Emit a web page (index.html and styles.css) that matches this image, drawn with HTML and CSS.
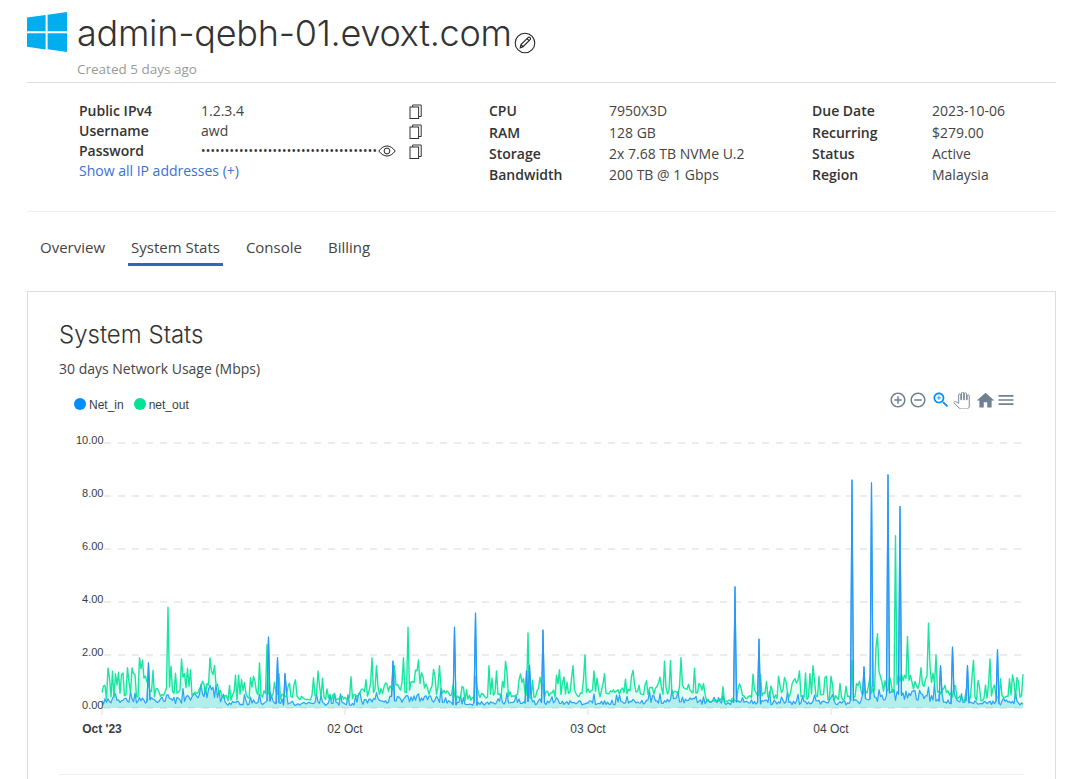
FILE: index.html
```html
<!DOCTYPE html>
<html lang="en">
<head>
<meta charset="utf-8">
<title>admin-qebh-01.evoxt.com</title>
<link rel="stylesheet" href="styles.css">
</head>
<body>
<div class="page">
  <header class="head">
    <svg class="oslogo" viewBox="0 0 40 40"><path d="M0 5.600 18.600 3v16.200H0zM20.600 2.700 40 0v19.200H20.600zM0 21.200h18.600v16.200L0 34.800zM20.600 21.200H40V40l-19.400-2.700z"/></svg>
    <div class="head-text">
      <div class="title-row">
        <h1 class="title">admin-qebh-01.evoxt.com</h1>
        <svg class="edit" viewBox="0 0 22 22"><circle cx="11" cy="11" r="9.800"/><path d="M6.200 15.800 7 12.600 14 5.600c.6-.6 1.500-.6 2.100 0s.6 1.500 0 2.100l-7 7zM13 6.600l2.400 2.400M7 12.600l2.100 2.100"/></svg>
      </div>
      <div class="created">Created 5 days ago</div>
    </div>
  </header>

  <section class="info">
    <div class="ip-grid">
      <span class="label">Public IPv4</span><span class="value">1.2.3.4</span>
      <svg class="copy" viewBox="0 0 14 15"><rect x="1" y="3" width="8.600" height="11.500"/><path d="M3.600 3V1h8.600v11.500h-2.600"/></svg>
      <span class="label">Username</span><span class="value">awd</span>
      <svg class="copy" viewBox="0 0 14 15"><rect x="1" y="3" width="8.600" height="11.500"/><path d="M3.600 3V1h8.600v11.500h-2.600"/></svg>
      <span class="label">Password</span>
      <span class="value pass"><span class="dots">•••••••••••••••••••••••••••••••••••••</span><svg class="eye" viewBox="0 0 18 12"><path d="M.8 6C3.400 2.600 6 1 9 1s5.600 1.600 8.200 5c-2.600 3.400-5.200 5-8.200 5S3.400 9.400.8 6z"/><circle cx="9" cy="6" r="2.900"/></svg></span>
      <svg class="copy" viewBox="0 0 14 15"><rect x="1" y="3" width="8.600" height="11.500"/><path d="M3.600 3V1h8.600v11.500h-2.600"/></svg>
      <a class="more" href="#">Show all IP addresses (+)</a>
    </div>
    <div class="spec-grid spec-mid">
      <span class="label">CPU</span><span class="value">7950X3D</span>
      <span class="label">RAM</span><span class="value">128 GB</span>
      <span class="label">Storage</span><span class="value">2x 7.68 TB NVMe U.2</span>
      <span class="label">Bandwidth</span><span class="value">200 TB @ 1 Gbps</span>
    </div>
    <div class="spec-grid">
      <span class="label">Due Date</span><span class="value">2023-10-06</span>
      <span class="label">Recurring</span><span class="value">$279.00</span>
      <span class="label">Status</span><span class="value">Active</span>
      <span class="label">Region</span><span class="value">Malaysia</span>
    </div>
  </section>

  <nav class="tabs">
    <a class="tab" href="#">Overview</a>
    <a class="tab active" href="#">System Stats</a>
    <a class="tab" href="#">Console</a>
    <a class="tab" href="#">Billing</a>
  </nav>

  <main class="card">
    <h2 class="card-title">System Stats</h2>
    <p class="card-sub">30 days Network Usage (Mbps)</p>
    <div class="chart-top">
      <div class="legend">
        <span class="dot dot-in"></span><span class="legend-text">Net_in</span>
        <span class="dot dot-out"></span><span class="legend-text">net_out</span>
      </div>
      <div class="tools">
        <svg class="tool t-in" viewBox="0 0 24 24"><path d="M13 7h-2v4H7v2h4v4h2v-4h4v-2h-4V7zm-1-5C6.480 2 2 6.480 2 12s4.480 10 10 10 10-4.480 10-10S17.520 2 12 2zm0 18c-4.410 0-8-3.590-8-8s3.590-8 8-8 8 3.590 8 8-3.590 8-8 8z"/></svg>
        <svg class="tool t-out" viewBox="0 0 24 24"><path d="M7 11v2h10v-2H7zm5-9C6.480 2 2 6.480 2 12s4.480 10 10 10 10-4.480 10-10S17.520 2 12 2zm0 18c-4.410 0-8-3.590-8-8s3.590-8 8-8 8 3.590 8 8-3.590 8-8 8z"/></svg>
        <svg class="tool t-zoom" viewBox="0 0 24 24"><path d="M15.500 14h-.79l-.28-.27C15.410 12.590 16 11.110 16 9.500 16 5.910 13.090 3 9.500 3S3 5.910 3 9.500 5.910 16 9.500 16c1.610 0 3.090-.59 4.230-1.570l.27.28v.79l5 4.990L20.490 19l-4.990-5zm-6 0C7.010 14 5 11.990 5 9.500S7.010 5 9.500 5 14 7.010 14 9.500 11.990 14 9.500 14z"/><path d="M12 10h-2v2H9v-2H7V9h2V7h1v2h2v1z"/></svg>
        <svg class="tool t-pan" viewBox="0 0 24 24"><path d="M23 5.500V20c0 2.200-1.800 4-4 4h-7.300c-1.080 0-2.100-.43-2.850-1.190L1 14.830s1.260-1.230 1.300-1.250c.22-.19.49-.29.79-.29.22 0 .42.06.6.16.04.01 4.310 2.460 4.310 2.460V4c0-.83.67-1.500 1.500-1.500S11 3.170 11 4v7h1V1.500c0-.83.67-1.500 1.500-1.500S15 .67 15 1.500V11h1V2.500c0-.83.67-1.500 1.500-1.500s1.500.67 1.500 1.500V11h1V5.500c0-.83.67-1.500 1.500-1.500s1.500.67 1.500 1.500z"/></svg>
        <svg class="tool t-home" viewBox="0 0 24 24"><path d="M10 20v-6h4v6h5v-8h3L12 3 2 12h3v8z"/></svg>
        <svg class="tool t-menu" viewBox="0 0 24 24"><path d="M3 18h18v-2H3v2zm0-5h18v-2H3v2zm0-7v2h18V6H3z"/></svg>
      </div>
    </div>
    <svg id="chart" class="chart" viewBox="0 0 965 343">
      <g class="grid">
        <line x1="45" y1="12" x2="962" y2="12"/>
        <line x1="45" y1="65" x2="962" y2="65"/>
        <line x1="45" y1="118" x2="962" y2="118"/>
        <line x1="45" y1="171" x2="962" y2="171"/>
        <line x1="45" y1="224" x2="962" y2="224"/>
        <line x1="45" y1="277" x2="962" y2="277"/>
      </g>
      <g id="series"></g>
      <g class="ticks">
        <line x1="43" y1="277" x2="43" y2="284"/>
        <line x1="286" y1="277" x2="286" y2="284"/>
        <line x1="529" y1="277" x2="529" y2="284"/>
        <line x1="772" y1="277" x2="772" y2="284"/>
      </g>
      <g class="ylab">
        <text x="44.500" y="13">10.00</text>
        <text x="44.500" y="66">8.00</text>
        <text x="44.500" y="119">6.00</text>
        <text x="44.500" y="172">4.00</text>
        <text x="44.500" y="225">2.00</text>
        <text x="44.500" y="278">0.00</text>
      </g>
      <g class="xlab">
        <text class="strong" x="43" y="302">Oct '23</text>
        <text x="286" y="302">02 Oct</text>
        <text x="529" y="302">03 Oct</text>
        <text x="772" y="302">04 Oct</text>
      </g>
    </svg>
    <div class="card-rule"></div>
  </main>
</div>
<script src="chart.js"></script>
</body>
</html>
```
FILE: styles.css
```css
* { box-sizing: border-box; }
html, body { margin: 0; height: 779px; overflow: hidden; background: #fff; }
body { font-family: "Open Sans", sans-serif; color: #333; font-size: 14px; }
.page { padding: 12px 33px 0 27px; }

.head { display: flex; gap: 10px; height: 71px; border-bottom: 1px solid #ddd; }
.oslogo { width: 40px; height: 40px; fill: #00adef; flex: none; }
.head-text { display: flex; flex-direction: column; }
.title-row { display: flex; align-items: flex-end; gap: 2px; height: 43px; }
.title { margin: 0; font: 300 36px/44px Inter, sans-serif; color: #333; letter-spacing: -0.25px; white-space: nowrap; }
.edit { width: 22px; height: 22px; margin-bottom: 1px; fill: none; stroke: #222; stroke-width: 1.100; }
.created { margin-top: 5px; font-size: 13.500px; line-height: 19px; color: #9a9a9a; }

.info { display: flex; padding: 18px 0 0 52px; height: 129px; border-bottom: 1px solid #eee; }
.ip-grid { display: grid; grid-template-columns: 122px 208px 14px; grid-auto-rows: 20px; width: 410px; align-items: center; align-content: start; }
.spec-grid { display: grid; grid-template-columns: 120px auto; grid-auto-rows: 21.300px; margin-top: -0.400px; align-items: center; align-content: start; }
.spec-mid { width: 323px; }
.label { font-weight: 600; line-height: 20px; color: #333; }
.value { line-height: 20px; color: #444; white-space: nowrap; }
.pass { display: flex; align-items: center; }
.dots { width: 177px; overflow: hidden; font-size: 12px; letter-spacing: 0.25px; color: #333; flex: none; }
.eye { width: 18px; height: 12px; fill: none; stroke: #222; stroke-width: 1; flex: none; }
.copy { width: 14px; height: 15px; fill: none; stroke: #333; stroke-width: 1; }
.more { grid-column: 1 / -1; color: #3b6fd4; text-decoration: none; line-height: 20px; }

.tabs { display: flex; gap: 20px; padding: 21px 0 0 10px; height: 79px; }
.tab { display: block; height: 33px; padding: 0 3px; font-size: 15px; line-height: 28px; color: #444; text-decoration: none; }
.tab.active { border-bottom: 3px solid #3a62bd; }

.card { height: 600px; padding: 0 31px; border: 1px solid #ddd; }
.card-title { margin: 26px 0 0; font: 300 24px/34px Inter, sans-serif; color: #333; }
.card-sub { margin: 7px 0 0; font-size: 14px; line-height: 20px; color: #444; }
.chart-top { display: flex; justify-content: space-between; height: 52px; padding-top: 14px; }
.legend { display: flex; align-items: center; height: 20px; padding: 4px 0 0 15px; }
.dot { width: 12px; height: 12px; border-radius: 50%; margin-right: 3px; margin-top: -2px; }
.dot-in { background: #008ffb; }
.dot-out { background: #00e396; }
.legend-text { margin-right: 10px; font: 12px "Liberation Sans", sans-serif; color: #373d3f; }
.tools { display: flex; align-items: center; height: 20px; margin-top: -3px; padding-right: 8px; }
.tool { width: 18px; height: 18px; fill: #6e8192; flex: none; }
.t-out { margin-left: 2.500px; }
.t-zoom { width: 20px; height: 20px; margin-left: 4px; fill: #008ffb; }
.t-pan { width: 17px; height: 17px; margin-left: 2px; fill: #fff; stroke: #6e8192; stroke-width: 1.300; }
.t-home { width: 21px; height: 21px; margin-left: 5px; }
.t-menu { width: 20px; height: 20px; }

.chart { display: block; width: 965px; height: 343px; overflow: visible; }
.grid line { stroke: #e6e6e6; stroke-width: 1.500; stroke-dasharray: 7 7; }
.ticks line { stroke: #ddd; stroke-width: 1; }
.ylab text { font: 11px "Liberation Sans", sans-serif; fill: #373d3f; text-anchor: end; }
.xlab text { font: 12px "Liberation Sans", sans-serif; fill: #373d3f; text-anchor: middle; }
.xlab .strong { font-weight: 700; }
.area-in { fill: #6fdcdc; fill-opacity: 0.42; stroke: none; }
.area-out { fill: #00e396; fill-opacity: 0.1; stroke: none; }
.line-in { fill: none; stroke: #2ba3f6; stroke-width: 1.200; stroke-linejoin: round; }
.line-spike { fill: none; stroke: #2a98f6; stroke-width: 1.100; stroke-linejoin: round; }
.line-out { fill: none; stroke: #00e396; stroke-opacity: 0.9; stroke-width: 1.400; stroke-linejoin: round; }
.card-rule { border-top: 1px solid #eee; }
```
FILE: chart.js
```js
(function () {
  var X0 = 43, X1 = 965, Y0 = 277, UNIT = 26.5, STEP = 1.5;
  var seed = 20231004;
  function rnd() {
    seed |= 0; seed = seed + 0x6D2B79F5 | 0;
    var t = Math.imul(seed ^ seed >>> 15, 1 | seed);
    t = t + Math.imul(t ^ t >>> 7, 61 | t) ^ t;
    return ((t ^ t >>> 14) >>> 0) / 4294967296;
  }
  // page x, net_out base, net_in base
  var env = [[102,.5,.25],[135,.62,.28],[190,.7,.3],[215,.95,.7],[225,.4,.18],[262,.55,.22],[300,.45,.16],[345,.45,.16],
    [370,.7,.25],[410,.85,.4],[440,.7,.35],[460,.4,.15],[500,.55,.2],[540,.55,.2],[590,.65,.2],[660,.7,.25],[690,.75,.3],
    [705,.3,.2],[730,.3,.2],[760,.55,.22],[800,.5,.22],[850,.4,.2],[870,.8,.35],[900,.95,.55],[930,.85,.4],[960,.4,.2],[1024,.45,.2]];
  var blue = [[149,1.7],[268,2.68],[278,1.9],[285,1.3],[393,1.77],[454,3.05],[476,3.58],[530,1.6],[526,1.4],[543,2.94],[735,4.57],[759,2.6],
    [852,8.6],[864,1.55],[872,8.5],[888,8.8],[900,7.6],[941,1.6],[952,2.3],[967,1.6],[998,2.2]];
  var green = [[140,1.9],[143,1.8],[133,1.3],[168,3.8],[181,1.85],[185,1.3],[210,1.9],[214,1.6],[259,1.7],[267,2.4],[279,1.3],[372,1.9],[376,1.6],
    [408,3.05],[403,1.9],[395,1.6],[439,1.6],[489,1.6],[497,1.4],[506,1.77],[528,2.83],[573,1.6],[585,2.0],[594,1.4],[604,1.3],
    [664,1.77],[681,1.9],[695,1.5],[778,1.2],[799,1.4],[813,1.6],[810,1.3],[827,1.2],[852,1.8],[876,2.3],[878,2.8],[896,6.5],[908,2.7],[929,3.2],[936,2.0],[974,1.8],[990,1.85],[1000,1.1],[1010,1.1]];
  function base(x, k) {
    for (var i = 1; i < env.length; i++) {
      if (x <= env[i][0]) {
        var a = env[i - 1], b = env[i], t = (x - a[0]) / (b[0] - a[0]);
        return a[k] + (b[k] - a[k]) * t;
      }
    }
    return env[env.length - 1][k];
  }
  var n = Math.floor((X1 - X0) / STEP) + 1, gv = [], bv = [], burst = 0;
  for (var i = 0; i < n; i++) {
    var x = 102 + i * STEP;
    var g = base(x, 1), b = base(x, 2);
    g = g * (0.65 + rnd() * 0.55);
    if (burst > 0) { g += 0.2 + rnd() * 0.5; burst--; }
    else if (rnd() > 0.75) { g += 0.25 + rnd() * 0.7; burst = rnd() > 0.6 ? 1 : 0; }
    b = b * (0.55 + rnd() * 0.9);
    if (rnd() > 0.85) b += 0.08 + rnd() * 0.3;
    gv.push(g); bv.push(b);
  }
  function apply(list, arr) {
    list.forEach(function (p) {
      var k = Math.round((p[0] - 102) / STEP);
      if (k >= 0 && k < n) arr[k] = p[1];
    });
  }
  apply(blue, bv); apply(green, gv);
  function pts(arr) {
    return arr.map(function (v, i) {
      return (X0 + i * STEP) + ' ' + (Y0 - v * UNIT).toFixed(1);
    });
  }
  function add(cls, d) {
    var el = document.createElementNS('http://www.w3.org/2000/svg', 'path');
    el.setAttribute('class', cls);
    el.setAttribute('d', d);
    document.getElementById('series').appendChild(el);
  }
  var gp = pts(gv), bp = pts(bv), end = (X0 + (n - 1) * STEP);
  add('area-out', 'M' + gp.join('L') + 'L' + end + ' ' + Y0 + 'L' + X0 + ' ' + Y0 + 'Z');
  add('area-in', 'M' + bp.join('L') + 'L' + end + ' ' + Y0 + 'L' + X0 + ' ' + Y0 + 'Z');
  add('line-in', 'M' + bp.join('L'));
  add('line-out', 'M' + gp.join('L'));
  // tall net_in spikes stay visible above net_out
  blue.forEach(function (p) {
    var k = Math.round((p[0] - 102) / STEP), xx = X0 + k * STEP;
    add('line-spike', 'M' + (xx - STEP) + ' ' + (Y0 - bv[k - 1] * UNIT).toFixed(1) + 'L' + xx + ' ' + (Y0 - p[1] * UNIT).toFixed(1) + 'L' + (xx + STEP) + ' ' + (Y0 - bv[k + 1] * UNIT).toFixed(1));
  });
})();
```
